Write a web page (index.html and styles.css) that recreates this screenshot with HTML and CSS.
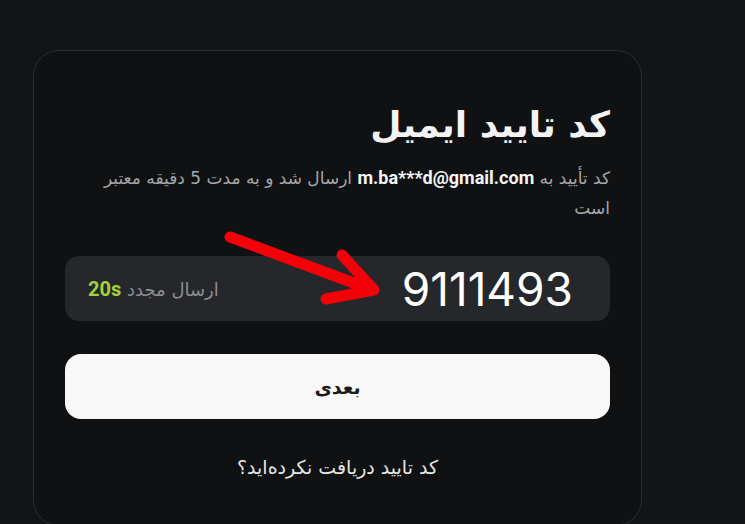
FILE: index.html
```html
<!DOCTYPE html>
<html lang="fa">
<head>
<meta charset="utf-8">
<title>کد تایید ایمیل</title>
<link rel="stylesheet" href="styles.css">
</head>
<body>
<div class="card">
  <h1 class="title">کد تایید ایمیل</h1>
  <p class="desc"><span>کد تأیید به </span><b class="email">m.ba***d@gmail.com</b><span> ارسال شد و به مدت 5 دقیقه معتبر</span><br><span>است</span></p>
  <div class="code-box">
    <span class="code">9111493</span>
    <span class="resend">ارسال مجدد <b class="timer">20s</b></span>
  </div>
  <button class="next">بعدی</button>
  <div class="help">کد تایید دریافت نکرده‌اید؟</div>
</div>
<svg class="arrow" width="180" height="90" viewBox="0 0 180 90" xmlns="http://www.w3.org/2000/svg">
  <g fill="none" stroke="#f40009" stroke-width="11" stroke-linecap="round" stroke-linejoin="round">
    <path d="M10 15 L150 67"/>
    <path d="M122 33 L154 68 L106 77"/>
  </g>
</svg>
</body>
</html>
```
FILE: styles.css
```css
html, body {
  margin: 0;
  padding: 0;
}
body {
  background: #131416;
  width: 745px;
  height: 524px;
  overflow: hidden;
  position: relative;
  direction: ltr;
  font-family: "DejaVu Sans", "Noto Sans", sans-serif;
}
.card {
  box-sizing: border-box;
  margin: 50px 103px 0 33px;
  width: 609px;
  height: 476px;
  border: 1px solid #2a2c30;
  border-radius: 26px;
  background: #0f1113;
  padding: 44px 31px 0 31px;
  direction: rtl;
  display: flex;
  flex-direction: column;
}
.title {
  margin: 0;
  font-size: 36px;
  line-height: 60px;
  font-weight: 700;
  color: #f3f3f3;
  text-align: right;
  letter-spacing: -0.5px;
}
.desc {
  margin: 8px 0 0 0;
  font-size: 17px;
  line-height: 30px;
  color: #a6a7ab;
  text-align: right;
}
.email {
  font-family: Roboto, "Liberation Sans", sans-serif;
  font-weight: 700;
  color: #f5f5f5;
  font-size: 18px;
  line-height: 1;
}
.code-box {
  margin-top: 33px;
  height: 65px;
  border-radius: 14px;
  background: #26272b;
  display: flex;
  align-items: center;
  justify-content: space-between;
  padding: 0 37px 0 23px;
}
.code {
  direction: ltr;
  font-family: Inter, Roboto, sans-serif;
  font-size: 46px;
  font-weight: 400;
  color: #ffffff;
  letter-spacing: 0;
}
.resend {
  font-size: 18px;
  color: #8c8d92;
}
.timer {
  font-family: Roboto, "Liberation Sans", sans-serif;
  font-weight: 700;
  font-size: 20px;
  color: #a4d13d;
}
.next {
  margin-top: 33px;
  height: 65px;
  border: none;
  border-radius: 16px;
  background: #f8f8f8;
  color: #1a1a1a;
  font-family: "DejaVu Sans", sans-serif;
  font-size: 19px;
  font-weight: 700;
  padding: 0;
}
.help {
  margin-top: 33px;
  text-align: center;
  font-size: 19px;
  color: #e6e6e6;
  line-height: 30px;
}
.arrow {
  position: absolute;
  left: 220px;
  top: 222px;
}
```
